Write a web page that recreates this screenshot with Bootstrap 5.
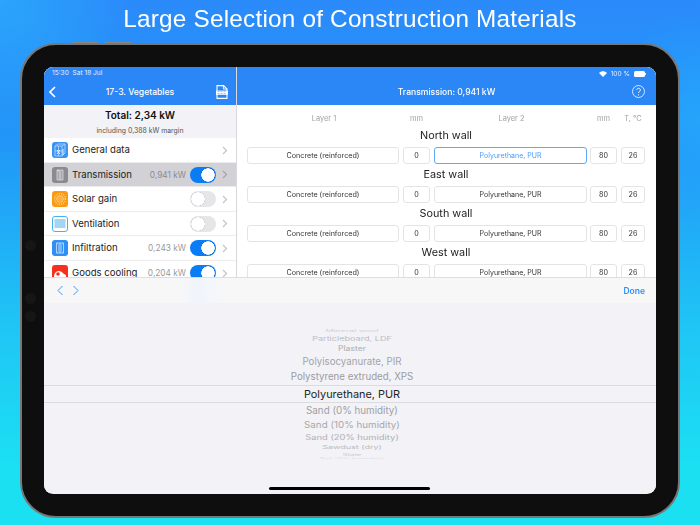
<!doctype html>
<html lang="en">
<head>
<meta charset="utf-8">
<title>Construction Materials</title>
<link href="https://cdn.jsdelivr.net/npm/bootstrap@5.3.0/dist/css/bootstrap.min.css" rel="stylesheet">
<style>
html,body{height:525px;overflow:hidden}
body{margin:0;font-family:Inter,"Liberation Sans",sans-serif;color:#1c1c1e;
 background:radial-gradient(circle at 0 0,#2aa6fb 0,rgba(42,166,251,0) 130px),radial-gradient(circle at 700px 120px,#25a4fc 0,rgba(37,164,252,0) 110px),linear-gradient(180deg,#2b8afa 0,#2196f8 140px,#1fc6f5 330px,#1be0f2 470px)}
.headline{height:43px;margin:0;padding-top:5px;font-size:24.3px;line-height:28px;font-weight:400;color:#fff;text-align:center;font-family:"Liberation Sans",sans-serif;letter-spacing:.22px;filter:blur(.3px)}
.ipad{position:relative;width:660px;height:475px;margin-left:20px;padding:22px;background:#0e0e0e;border:2px solid #777;border-radius:36px}
.cam{position:absolute;left:3px;width:11px;height:11px;border-radius:50%;background:#161616}
.cam-a{top:195px}.cam-b{top:248px}.cam-c{top:266px}
.btn-top{position:absolute;top:-3px;height:1px;background:#888}
.btn-a{left:51px;width:25px}.btn-b{left:83px;width:26px}
.screen{height:427px;border-radius:9px;overflow:hidden;background:#f2f2f7;filter:blur(.3px)}
.upper{height:210px;background:#fff;overflow:hidden}
.pane-l{width:192px;flex:none;border-right:1px solid #d8d8dc;box-sizing:content-box;overflow:hidden}
.pane-r{flex:1;min-width:0;overflow:hidden}
.topbar{height:38px;background:#2a87f5;color:#fff;position:relative;flex:none}
.pane-l .topbar{border-right:1px solid #5aa2f6;margin-right:-1px}
.status{height:12px;padding:2px 8px 0;font-size:6.6px;line-height:9px;color:#e6f0fe}
.pane-r .status{padding-right:10px}
.bar-title{font-size:8.6px;font-weight:500;line-height:10px;text-align:center;padding-top:8px}
.ic-back{position:absolute;left:5px;top:19px}
.ic-pdf{position:absolute;left:172px;top:18px}
.ic-help{position:absolute;right:11px;top:18px}
.summary{height:33px;background:#f2f2f7;text-align:center;padding-top:4px}
.summary b{display:block;font-size:10px;line-height:12px;font-weight:600;color:#111}
.summary span{display:block;font-size:6.9px;line-height:9px;margin-top:5px;color:#555}
.rowlist .list-group-item{height:24.5px;padding:1px 8px 0;border-width:0 0 1px;border-color:#ececef;font-size:9.6px;color:#222;background:#fff;gap:4px;white-space:nowrap}
.rowlist .list-group-item.picked{background:#d1d1d6}
.mico{width:16px;height:16px;flex:none;display:block}
.val{margin-left:auto;font-size:8.3px;color:#999}
.picked .val{color:#8a8a8e}
.tail{margin-left:auto;display:flex;align-items:center;flex:none}
.val + .tail{margin-left:0}
.rowlist .form-check{margin:0;padding:0;min-height:0;display:flex}
.rowlist .form-check-input{width:26px;height:16px;margin:0;border:0;border-radius:8px;background-color:#e6e6e9;background-image:radial-gradient(circle 7px at 8px 8px,#fff 92%,rgba(0,0,0,.12) 100%,transparent 104%);background-position:0 0;background-size:auto}
.rowlist .form-check-input:checked{background-color:#0a7cf5;background-image:radial-gradient(circle 7px at 18px 8px,#fff 92%,rgba(0,0,0,.12) 100%,transparent 104%);background-position:0 0}
.chev{margin-left:6px;flex:none;display:block}
.pad{padding:8px 11px 0 10px}
.cols{display:flex;gap:4px}
.w1{width:152px}.w2{width:27px}.w3{width:153px}.w4{width:27px;margin-left:-1px}.w5{width:24px}
.cols>*{flex:none;text-align:center}
.heads{height:12px;margin-bottom:3px;font-size:7.4px;line-height:12px;color:#a2a2a2}
.heads .w1,.heads .w3{padding-left:2px}
.wall{height:19px;font-size:10.8px;line-height:15px;text-align:center;color:#222}
.cols .fld{height:17px;padding:0;border:1px solid #e4e4e6;border-radius:3px;font-size:7.15px;line-height:15px;color:#333;background:#fff;margin-bottom:3px}
.cols .fld.w3{font-size:7px}
.cols .fld.act{border-color:#62a8f8;color:#4a9cf9}
.tools{height:26px;background:linear-gradient(90deg,#f7f7f8 0,#f7f7f8 22%,#f0f5fb 25%,#f7f7f8 30%,#f7f7f8 100%);border-top:1px solid #dedee0;padding:0 11px 0 12px}
.tools .btn{padding:0;border:0;font-size:8.5px;font-weight:600;color:#2f8ffb;line-height:12px}
.wheel{height:190px;padding:25px 0 0 4px;position:relative;background:#f2f2f7}
.tick{height:var(--h);line-height:var(--h);text-align:center;white-space:nowrap;color:#a6a6aa}
.tick span{display:inline-block;line-height:var(--h);vertical-align:top}
.t1{--h:6.5px;font-size:8.8px;color:#d0d0d4}.t1 span{transform:scaleY(.4)}
.t2{--h:8.5px;font-size:9.1px;color:#bdbdc1}.t2 span{transform:scaleY(.68)}
.t3{--h:11.5px;font-size:8.7px;color:#acacb0}.t3 span{transform:scaleY(.82)}
.t4{--h:14px;font-size:9.7px;color:#a4a4a8}
.t5{--h:16px;font-size:9.7px;color:#9c9ca0}
.t6{--h:18px;font-size:10.9px;color:#1f1f21;border-top:1px solid #dcdce0;border-bottom:1px solid #dcdce0;margin-left:-4px}
.t6 span{line-height:16px;padding-left:4px}
.t7{--h:15px;font-size:9.8px;color:#a0a0a4}
.t8{--h:14px;font-size:9.8px;color:#a8a8ac}.t8 span{transform:scaleY(.92)}
.t9{--h:11.5px;font-size:9.4px;color:#b0b0b4}.t9 span{transform:scaleY(.78)}
.t10{--h:8.5px;font-size:9px;color:#bcbcc0}.t10 span{transform:scaleY(.6)}
.t11{--h:5px;font-size:8px;color:#cbcbcf}.t11 span{transform:scaleY(.4)}
.t12{--h:3.5px;font-size:7.5px;color:#dcdce0}.t12 span{transform:scaleY(.22)}
.homebar{position:absolute;left:225px;bottom:3px;width:161px;height:3px;border-radius:2px;background:#000}
</style>
</head>
<body>
<h1 class="headline">Large Selection of Construction Materials</h1>
<div class="ipad">
  <i class="btn-top btn-a"></i><i class="btn-top btn-b"></i>
  <i class="cam cam-a"></i><i class="cam cam-b"></i><i class="cam cam-c"></i>
  <div class="screen d-flex flex-column">
    <div class="upper d-flex flex-none">
      <div class="pane-l">
        <div class="topbar">
          <div class="status">15:30&nbsp; Sat 18 Jul</div>
          <div class="bar-title">17-3. Vegetables</div>
          <svg class="ic-back" width="7" height="12" viewBox="0 0 7 12"><path d="M6 1 1 6l5 5" fill="none" stroke="#fff" stroke-width="1.6"/></svg>
          <svg class="ic-pdf" width="12" height="14" viewBox="0 0 12 14"><path d="M1 .6h6.6L11 4v9.4H1z" fill="none" stroke="#fff" stroke-width="1.1"/><path d="M7.4.6V4H11" fill="none" stroke="#fff" stroke-width=".9"/><rect x="0" y="5.6" width="12" height="4.2" fill="#fff"/><path d="M1.5 6.6h9M1.5 8.6h9" stroke="#7fb3f7" stroke-width=".8" stroke-dasharray="2 1"/></svg>
        </div>
        <div class="summary"><b>Total: 2,34 kW</b><span>including 0,388 kW margin</span></div>
        <div class="list-group list-group-flush rowlist">
          <div class="list-group-item d-flex align-items-center">
            <svg class="mico" viewBox="0 0 16 16"><rect width="16" height="16" rx="3" fill="#3b93f3"/><path d="M3 4 6 2h7v9l-3 3H3zM3 4h7v10M10 4l3-2M3 9h7M6.500 4v10" fill="none" stroke="#b9d9fb" stroke-width=".8"/><path d="m5 8 3 4m0-4-3 4M11 7v6" stroke="#e6f2ff" stroke-width="1" fill="none"/></svg>
            <span>General data</span>
            <span class="tail"><svg class="chev" width="6" height="9" viewBox="0 0 6 9"><path d="m1 1 3.500 3.500L1 8" fill="none" stroke="#c4c4c8" stroke-width="1.200"/></svg></span>
          </div>
          <div class="list-group-item picked d-flex align-items-center">
            <svg class="mico" viewBox="0 0 16 16"><rect width="16" height="16" rx="3" fill="#8b8b8f"/><path d="M5 3h6v10H5z" fill="#a9a9ad" stroke="#d9d9dc" stroke-width=".8"/><path d="M5 3l3 1.500V13" fill="none" stroke="#e6e6e8" stroke-width=".8"/></svg>
            <span>Transmission</span>
            <span class="val ms-auto">0,941 kW</span>
            <span class="tail"><span class="form-check form-switch"><input class="form-check-input" type="checkbox" role="switch" checked aria-label="Transmission"></span><svg class="chev" width="6" height="9" viewBox="0 0 6 9"><path d="m1 1 3.500 3.500L1 8" fill="none" stroke="#a5a5a9" stroke-width="1.200"/></svg></span>
          </div>
          <div class="list-group-item d-flex align-items-center">
            <svg class="mico" viewBox="0 0 16 16"><rect width="16" height="16" rx="3" fill="#fb9a10"/><circle cx="8" cy="8" r="3.300" fill="#fdae3f" stroke="#ffd79a" stroke-width=".7"/><circle cx="8" cy="8" r="5.400" fill="none" stroke="#ffd79a" stroke-width="1.300" stroke-dasharray="1 1"/></svg>
            <span>Solar gain</span>
            <span class="tail"><span class="form-check form-switch"><input class="form-check-input" type="checkbox" role="switch" aria-label="Solar gain"></span><svg class="chev" width="6" height="9" viewBox="0 0 6 9"><path d="m1 1 3.500 3.500L1 8" fill="none" stroke="#c4c4c8" stroke-width="1.200"/></svg></span>
          </div>
          <div class="list-group-item d-flex align-items-center">
            <svg class="mico" viewBox="0 0 16 16"><rect x=".5" y=".5" width="15" height="15" rx="2.500" fill="#fff" stroke="#45b0ea"/><rect x="2.500" y="3" width="11" height="9" fill="#a3d6f2"/></svg>
            <span>Ventilation</span>
            <span class="tail"><span class="form-check form-switch"><input class="form-check-input" type="checkbox" role="switch" aria-label="Ventilation"></span><svg class="chev" width="6" height="9" viewBox="0 0 6 9"><path d="m1 1 3.500 3.500L1 8" fill="none" stroke="#c4c4c8" stroke-width="1.200"/></svg></span>
          </div>
          <div class="list-group-item d-flex align-items-center">
            <svg class="mico" viewBox="0 0 16 16"><rect width="16" height="16" rx="3" fill="#2f8ff5"/><path d="M4.500 3h7v10h-7z" fill="none" stroke="#cfe5fd" stroke-width=".8"/><path d="M8 3v10" stroke="#cfe5fd" stroke-width=".9"/><path d="m4.500 3 2 1.500v7l-2 1.500M11.500 3l-2 1.500v7l2 1.500" fill="none" stroke="#a9d0fb" stroke-width=".6"/></svg>
            <span>Infiltration</span>
            <span class="val ms-auto">0,243 kW</span>
            <span class="tail"><span class="form-check form-switch"><input class="form-check-input" type="checkbox" role="switch" checked aria-label="Infiltration"></span><svg class="chev" width="6" height="9" viewBox="0 0 6 9"><path d="m1 1 3.500 3.500L1 8" fill="none" stroke="#c4c4c8" stroke-width="1.200"/></svg></span>
          </div>
          <div class="list-group-item d-flex align-items-center">
            <svg class="mico" viewBox="0 0 16 16"><rect width="16" height="16" rx="3" fill="#f5301f"/><path d="M2 13c0-5 2-7 5-7 3 0 4 3 7 4v3z" fill="#fff"/><circle cx="6" cy="9" r="1.800" fill="#f5301f"/></svg>
            <span>Goods cooling</span>
            <span class="val ms-auto">0,204 kW</span>
            <span class="tail"><span class="form-check form-switch"><input class="form-check-input" type="checkbox" role="switch" checked aria-label="Goods cooling"></span><svg class="chev" width="6" height="9" viewBox="0 0 6 9"><path d="m1 1 3.500 3.500L1 8" fill="none" stroke="#c4c4c8" stroke-width="1.200"/></svg></span>
          </div>
        </div>
      </div>
      <div class="pane-r">
        <div class="topbar">
          <div class="status d-flex justify-content-end align-items-center gap-1">
            <svg width="8" height="6" viewBox="0 0 8 6"><path d="M4 6 0 2c2.300-2.400 5.700-2.400 8 0z" fill="#fff"/></svg>
            <span>100 %</span>
            <svg width="12" height="6" viewBox="0 0 12 6"><rect width="11" height="6" rx="1.500" fill="#fff"/><rect x="11" y="2" width="1" height="2" fill="#dbeafe"/></svg>
          </div>
          <div class="bar-title">Transmission: 0,941 kW</div>
          <svg class="ic-help" width="13" height="13" viewBox="0 0 13 13"><circle cx="6.500" cy="6.500" r="6" fill="none" stroke="#fff" stroke-width=".8"/><path d="M4.700 5c0-2.300 3.700-2.300 3.700 0 0 1.500-1.900 1.400-1.900 3" fill="none" stroke="#fff" stroke-width=".9"/><circle cx="6.500" cy="9.800" r=".6" fill="#fff"/></svg>
        </div>
        <div class="pad">
          <div class="cols heads"><span class="w1">Layer 1</span><span class="w2">mm</span><span class="w3">Layer 2</span><span class="w4">mm</span><span class="w5">T, °C</span></div>
          <div class="wall">North wall</div>
          <div class="cols"><button class="btn fld w1">Concrete (reinforced)</button><button class="btn fld w2">0</button><button class="btn fld act w3">Polyurethane, PUR</button><button class="btn fld w4">80</button><button class="btn fld w5">26</button></div>
          <div class="wall">East wall</div>
          <div class="cols"><button class="btn fld w1">Concrete (reinforced)</button><button class="btn fld w2">0</button><button class="btn fld w3">Polyurethane, PUR</button><button class="btn fld w4">80</button><button class="btn fld w5">26</button></div>
          <div class="wall">South wall</div>
          <div class="cols"><button class="btn fld w1">Concrete (reinforced)</button><button class="btn fld w2">0</button><button class="btn fld w3">Polyurethane, PUR</button><button class="btn fld w4">80</button><button class="btn fld w5">26</button></div>
          <div class="wall">West wall</div>
          <div class="cols"><button class="btn fld w1">Concrete (reinforced)</button><button class="btn fld w2">0</button><button class="btn fld w3">Polyurethane, PUR</button><button class="btn fld w4">80</button><button class="btn fld w5">26</button></div>
        </div>
      </div>
    </div>
    <div class="tools d-flex align-items-center justify-content-between">
      <div class="d-flex gap-2">
        <svg width="8" height="11" viewBox="0 0 8 11"><path d="M6.500 1 2 5.500 6.500 10" fill="none" stroke="#3d96f8" stroke-width="1"/></svg>
        <svg width="8" height="11" viewBox="0 0 8 11"><path d="m1.500 1 4.500 4.500L1.500 10" fill="none" stroke="#3d96f8" stroke-width="1"/></svg>
      </div>
      <button class="btn">Done</button>
    </div>
    <div class="wheel">
      <div class="tick t1"><span>Mineral wool</span></div>
      <div class="tick t2"><span>Particleboard, LDF</span></div>
      <div class="tick t3"><span>Plaster</span></div>
      <div class="tick t4"><span>Polyisocyanurate, PIR</span></div>
      <div class="tick t5"><span>Polystyrene extruded, XPS</span></div>
      <div class="tick t6"><span>Polyurethane, PUR</span></div>
      <div class="tick t7"><span>Sand (0% humidity)</span></div>
      <div class="tick t8"><span>Sand (10% humidity)</span></div>
      <div class="tick t9"><span>Sand (20% humidity)</span></div>
      <div class="tick t10"><span>Sawdust (dry)</span></div>
      <div class="tick t11"><span>Slate</span></div>
      <div class="tick t12"><span>Soil (0% humidity)</span></div>
      <div class="homebar"></div>
    </div>
  </div>
</div>
<script src="https://cdn.jsdelivr.net/npm/bootstrap@5.3.0/dist/js/bootstrap.bundle.min.js"></script>
</body>
</html>
